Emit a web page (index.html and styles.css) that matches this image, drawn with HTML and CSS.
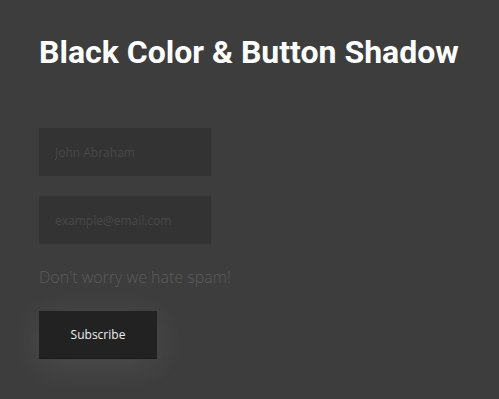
FILE: index.html
```html
<!DOCTYPE html>
<html lang="en">
<head>
  <meta charset="UTF-8">
  <title>Black Color &amp; Button Shadow</title>
  <link rel="stylesheet" href="styles.css">
</head>
<body>
  <div class="wrap">
    <h1 class="title">Black Color &amp; Button Shadow</h1>
    <form class="signup">
      <input type="text" class="field" placeholder="John Abraham">
      <input type="email" class="field" placeholder="example@email.com">
      <p class="note">Don't worry we hate spam!</p>
      <button type="button" class="btn">Subscribe</button>
    </form>
  </div>
</body>
</html>
```

FILE: styles.css
```css
body {
  margin: 0;
  background: #3d3d3d;
  font-family: 'Open Sans', sans-serif;
}

.wrap {
  padding: 30px 39px;
}

.title {
  margin: 0;
  font-family: Roboto, sans-serif;
  font-weight: 700;
  font-size: 32px;
  line-height: 44px;
  color: #fff;
}

.signup {
  display: flex;
  flex-direction: column;
  align-items: flex-start;
  margin-top: 54px;
}

.field {
  width: 172px;
  height: 48px;
  box-sizing: border-box;
  margin-bottom: 20px;
  padding: 0 16px;
  border: none;
  background: #333;
  font-family: 'Open Sans', sans-serif;
  font-size: 12px;
  color: #555;
  outline: none;
}

.field::placeholder {
  color: #484848;
}

.note {
  margin: 1px 0 22px;
  font-size: 16px;
  font-weight: 300;
  line-height: 24px;
  color: #5c5c5c;
}

.btn {
  width: 118px;
  height: 48px;
  border: none;
  border-bottom: 1px solid #1b1b1b;
  background: #222;
  color: #eee;
  font-family: 'Open Sans', sans-serif;
  font-size: 12px;
  box-shadow: 0 6px 36px rgba(255, 255, 255, 0.09);
  cursor: pointer;
}
```
